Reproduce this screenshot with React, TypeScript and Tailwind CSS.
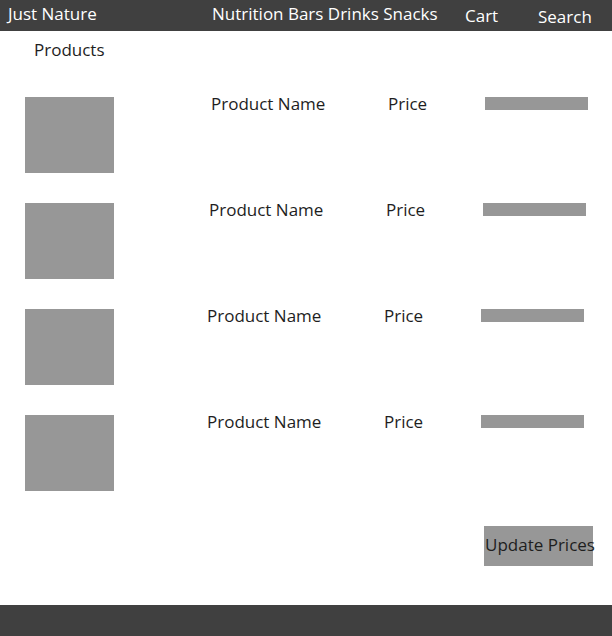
const rows = [
  { pad: "pl-[97px]" },
  { pad: "pl-[95px]" },
  { pad: "pl-[93px]" },
  { pad: "pl-[93px]" },
];

function ProductRow({ pad }: { pad: string }) {
  return (
    <div className="flex items-start h-[106px]">
      <div className="ml-[25px] mt-[5px] w-[89px] h-[76px] bg-[#979797]" />
      <div className={`flex items-start ${pad}`}>
        <span className="w-[177px]">Product Name</span>
        <span className="w-[97px]">Price</span>
        <div className="mt-[5px] w-[103px] h-[13px] bg-[#979797]" />
      </div>
    </div>
  );
}

export default function App() {
  return (
    <div
      className="flex flex-col h-[636px] w-[612px] bg-white text-[#1e1e1e] text-[17px] leading-[23px]"
      style={{ fontFamily: '"Open Sans", sans-serif' }}
    >
      <header className="flex items-start h-[31px] bg-[#404040] text-white pl-[8px]">
        <span className="w-[204px] pt-[2px]">Just Nature</span>
        <span className="w-[253px] pt-[2px]">Nutrition Bars Drinks Snacks</span>
        <span className="w-[73px] pt-[4px]">Cart</span>
        <span className="pt-[5px]">Search</span>
      </header>
      <main className="flex flex-col">
        <h1 className="mt-[7px] pl-[34px]">Products</h1>
        <div className="flex flex-col mt-[31px]">
          {rows.map((r, i) => (
            <ProductRow key={i} pad={r.pad} />
          ))}
        </div>
        <div className="flex mt-[10px] pl-[484px]">
          <button className="flex items-center w-[109px] h-[40px] pl-[1px] pb-[4px] bg-[#979797] whitespace-nowrap">
            Update Prices
          </button>
        </div>
      </main>
      <footer className="mt-auto h-[31px] bg-[#404040]" />
    </div>
  );
}
